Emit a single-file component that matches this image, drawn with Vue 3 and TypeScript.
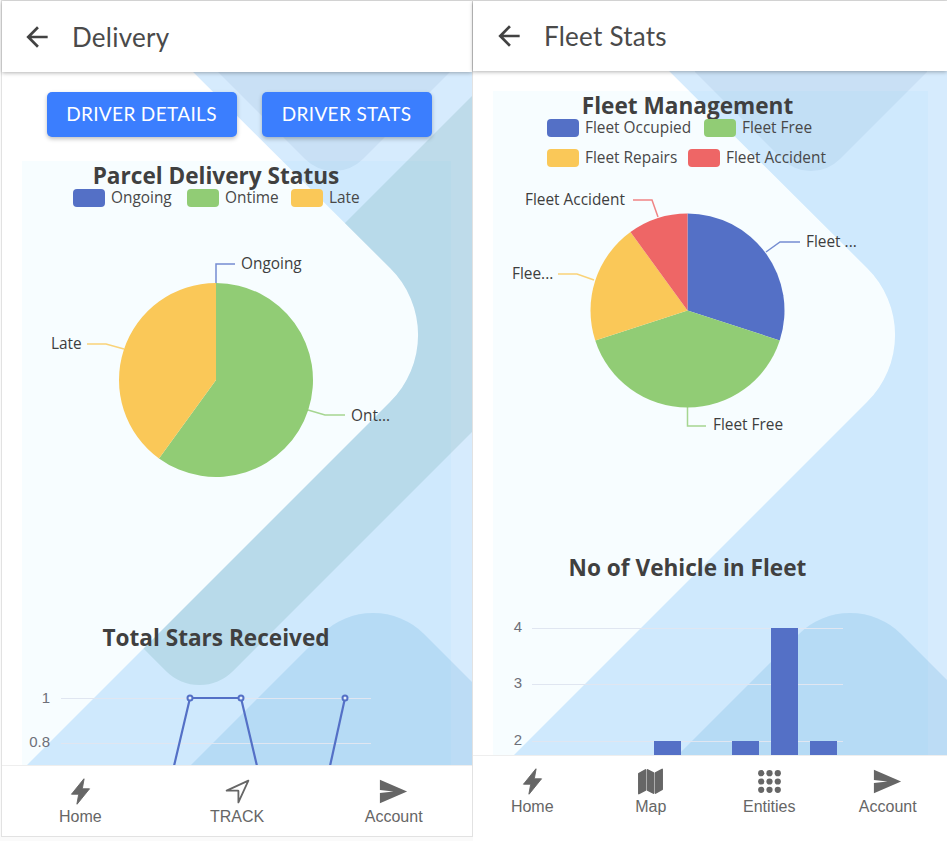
<script setup lang="ts">
// pie slice between two angles, degrees clockwise from 12 o'clock
function slice(cx: number, cy: number, r: number, from: number, to: number): string {
  const pt = (deg: number) => {
    const a = (deg * Math.PI) / 180
    return `${(cx + r * Math.sin(a)).toFixed(2)} ${(cy - r * Math.cos(a)).toFixed(2)}`
  }
  const large = to - from > 180 ? 1 : 0
  return `M${cx} ${cy}L${pt(from)}A${r} ${r} 0 ${large} 1 ${pt(to)}Z`
}

const colors = { blue: '#5470c6', green: '#91cc75', yellow: '#fac858', red: '#ee6666' }

const phones = [
  {
    id: 'delivery',
    title: 'Delivery',
    nav: [
      { icon: 'bolt', label: 'Home' },
      { icon: 'navigate', label: 'TRACK' },
      { icon: 'send', label: 'Account' },
    ],
  },
  {
    id: 'fleet',
    title: 'Fleet Stats',
    nav: [
      { icon: 'bolt', label: 'Home' },
      { icon: 'map', label: 'Map' },
      { icon: 'dots', label: 'Entities' },
      { icon: 'send', label: 'Account' },
    ],
  },
]

const deliveryLegend = [
  { x: 73, tx: 111, y: 189, color: colors.blue, label: 'Ongoing' },
  { x: 187, tx: 225, y: 189, color: colors.green, label: 'Ontime' },
  { x: 291, tx: 329, y: 189, color: colors.yellow, label: 'Late' },
]

const fleetLegend = [
  { x: 547, tx: 585, y: 119, color: colors.blue, label: 'Fleet Occupied' },
  { x: 704, tx: 742, y: 119, color: colors.green, label: 'Fleet Free' },
  { x: 547, tx: 585, y: 149, color: colors.yellow, label: 'Fleet Repairs' },
  { x: 688, tx: 726, y: 149, color: colors.red, label: 'Fleet Accident' },
]

const fleetBars = [
  { x: 654, y: 741 },
  { x: 732, y: 741 },
  { x: 771, y: 628 },
  { x: 810, y: 741 },
]

const dots = [6, 14, 22].flatMap((cy) => [6, 14, 22].map((cx) => ({ cx, cy })))
</script>

<template>
  <div class="screens">
    <section v-for="phone in phones" :key="phone.id" class="phone" :class="phone.id">
      <header class="top-bar">
        <svg class="back" viewBox="0 0 24 24" width="32" height="32">
          <path d="M20 11H7.830l5.590-5.590L12 4l-8 8 8 8 1.410-1.410L7.830 13H20z" />
        </svg>
        <h1>{{ phone.title }}</h1>
      </header>

      <main class="content">
        <!-- background art, same shapes on both screens shifted by 477px -->
        <svg class="art" :viewBox="phone.id === 'delivery' ? '2 72 470 693' : '473 71 474 684'">
          <g :transform="phone.id === 'delivery' ? '' : 'translate(477 0)'">
            <rect x="-10" y="60" width="500" height="800" fill="#d6ebfd" />
            <path d="M218 60V72L305 159A41 41 0 0 0 363 159L450 72V60Z" fill="#c9e0f5" />
            <path
              v-if="phone.id === 'delivery'"
              d="M480 88L130 438V635L166.200 671.200A47 47 0 0 0 232.800 671.200L480 424Z"
              fill="#bedbea"
            />
            <path d="M181 60L390 268A94 94 0 0 1 390 402L-50 842H-20V60Z" fill="#fff" />
            <path d="M115 841L322 634A72.400 72.400 0 0 1 424 634L640 850V860H115Z" fill="#bcdcf5" />
          </g>
        </svg>

        <div v-if="phone.id === 'delivery'" class="actions">
          <button class="btn wide">DRIVER DETAILS</button>
          <button class="btn">DRIVER STATS</button>
        </div>

        <div class="card">
          <svg v-if="phone.id === 'delivery'" class="chart" viewBox="22 161 429 604">
            <text class="title" x="216" y="184">Parcel Delivery Status</text>
            <g v-for="l in deliveryLegend" :key="l.label">
              <rect :x="l.x" :y="l.y" width="32" height="18" rx="4" :fill="l.color" />
              <text class="legend" :x="l.tx" y="202.500">{{ l.label }}</text>
            </g>

            <path :d="slice(216, 380, 97, 0, 216)" :fill="colors.green" />
            <path :d="slice(216, 380, 97, 216, 360)" :fill="colors.yellow" />
            <path class="lead" d="M216 283V264H235" :stroke="colors.blue" />
            <path class="lead" d="M124 349L106 344H87" :stroke="colors.yellow" />
            <path class="lead" d="M308 410L325 415H345" :stroke="colors.green" />
            <text class="label" x="241" y="268.500">Ongoing</text>
            <text class="label" x="51" y="348.500">Late</text>
            <text class="label" x="351" y="420.500">Ont...</text>

            <text class="title" x="216" y="646">Total Stars Received</text>
            <line class="grid" x1="61" x2="371" y1="698.500" y2="698.500" />
            <line class="grid" x1="61" x2="371" y1="743.500" y2="743.500" />
            <text class="tick" x="50" y="703">1</text>
            <text class="tick" x="50" y="747">0.8</text>
            <path class="series" d="M174 766L190 698H241L257 766" />
            <path class="series" d="M330 766L345 698" />
            <circle class="point" cx="190" cy="698" r="2.500" />
            <circle class="point" cx="241" cy="698" r="2.500" />
            <circle class="point" cx="345" cy="698" r="2.500" />
          </svg>

          <svg v-else class="chart" viewBox="493 91 435 664">
            <text class="title" x="687.500" y="114">Fleet Management</text>
            <g v-for="l in fleetLegend" :key="l.label">
              <rect :x="l.x" :y="l.y" width="32" height="18" rx="4" :fill="l.color" />
              <text class="legend" :x="l.tx" :y="l.y + 13.5">{{ l.label }}</text>
            </g>

            <path :d="slice(687.5, 310.5, 97, 0, 108)" :fill="colors.blue" />
            <path :d="slice(687.5, 310.5, 97, 108, 252)" :fill="colors.green" />
            <path :d="slice(687.5, 310.5, 97, 252, 324)" :fill="colors.yellow" />
            <path :d="slice(687.5, 310.5, 97, 324, 360)" :fill="colors.red" />
            <path class="lead" d="M766 252L780 242H800" :stroke="colors.blue" />
            <path class="lead" d="M687.500 407V426H706" :stroke="colors.green" />
            <path class="lead" d="M594 280L577 274H558" :stroke="colors.yellow" />
            <path class="lead" d="M658 217L652 200H633" :stroke="colors.red" />
            <text class="label" x="806" y="246.500">Fleet ...</text>
            <text class="label" x="713" y="430">Fleet Free</text>
            <text class="label" x="512" y="278.500">Flee...</text>
            <text class="label" x="525" y="204.500">Fleet Accident</text>

            <text class="title" x="687.500" y="576">No of Vehicle in Fleet</text>
            <line class="grid" x1="532" x2="843" y1="628.500" y2="628.500" />
            <line class="grid" x1="532" x2="843" y1="684.500" y2="684.500" />
            <line class="grid" x1="532" x2="843" y1="741.500" y2="741.500" />
            <text class="tick" x="522" y="632">4</text>
            <text class="tick" x="522" y="688">3</text>
            <text class="tick" x="522" y="745">2</text>
            <rect v-for="b in fleetBars" :key="b.x" :x="b.x" :y="b.y" width="27" :height="760 - b.y" :fill="colors.blue" />
          </svg>
        </div>
      </main>

      <nav class="tabs">
        <a v-for="item in phone.nav" :key="item.label" class="tab">
          <svg v-if="item.icon === 'bolt'" class="icon" viewBox="0 0 512 512">
            <path d="M315.270 33L96 304h128l-31.510 173.230a2.360 2.360 0 002.330 2.770h0a2.360 2.360 0 001.890-.950L416 208H288l31.660-173.250a2.450 2.450 0 00-2.440-2.750h0a2.420 2.420 0 00-1.950 1z" stroke="currentColor" stroke-width="16" stroke-linejoin="round" />
          </svg>
          <svg v-else-if="item.icon === 'navigate'" class="icon" viewBox="0 0 512 512">
            <path d="M448 64L64 240.140h200a8 8 0 018 8V448z" fill="none" stroke="currentColor" stroke-width="32" stroke-linecap="round" stroke-linejoin="round" />
          </svg>
          <svg v-else-if="item.icon === 'send'" class="icon" viewBox="0 0 512 512">
            <path d="M16 464l480-208L16 48v180l240 28-240 28z" />
          </svg>
          <svg v-else-if="item.icon === 'map'" class="icon" viewBox="0 0 512 512">
            <path d="M50 118L168 50V406L50 470Z M204 50L308 106V462L204 406Z M344 106L462 42V394L344 462Z" stroke="currentColor" stroke-width="28" stroke-linejoin="round" />
          </svg>
          <svg v-else class="icon" viewBox="0 0 28 28">
            <circle v-for="d in dots" :key="`${d.cx}-${d.cy}`" :cx="d.cx" :cy="d.cy" r="3" />
          </svg>
          <span>{{ item.label }}</span>
        </a>
      </nav>
    </section>
  </div>
</template>

<style scoped>
.screens {
  display: flex;
  align-items: flex-start;
  width: 947px;
  height: 841px;
  overflow: hidden;
}

.phone {
  position: relative;
  display: flex;
  flex-direction: column;
  box-sizing: border-box;
  background: #fff;
}

.phone.delivery {
  width: 472px;
  height: 837px;
  margin-left: 1px;
  border: 1px solid #e2e2e2;
}

.phone.fleet {
  width: 474px;
  height: 841px;
  border-top: 1px solid #e2e2e2;
}

.top-bar {
  position: relative;
  z-index: 2;
  display: flex;
  align-items: center;
  flex: none;
  height: 71px;
  padding-left: 19px;
  background: #fff;
  box-shadow: 0 1px 4px rgba(0, 0, 0, 0.3);
}

.fleet .top-bar {
  padding-left: 20px;
  height: 70px;
}

.back {
  flex: none;
  fill: #424242;
}

h1 {
  margin: 0 0 0 19px;
  font-family: Lato, "Open Sans", sans-serif;
  font-size: 26px;
  font-weight: 400;
  letter-spacing: 0.25px;
  color: #4a4a4a;
}

.content {
  position: relative;
  flex: 1;
  display: flex;
  flex-direction: column;
  min-height: 0;
  overflow: hidden;
}

.art {
  position: absolute;
  inset: 0;
  width: 100%;
  height: 100%;
}

.actions {
  position: relative;
  display: flex;
  justify-content: center;
  gap: 25px;
  padding: 20px 0 0 4px;
  margin-bottom: 24px;
}

.btn {
  width: 170px;
  height: 45px;
  padding: 0 0 2px;
  border: 0;
  border-radius: 5px;
  background: #3b7efe;
  color: #fff;
  font-family: Lato, "Open Sans", sans-serif;
  font-size: 19px;
  letter-spacing: 0.35px;
  box-shadow: 0 2px 4px rgba(0, 0, 0, 0.25);
}

.btn.wide {
  width: 190px;
}

.card {
  position: relative;
  flex: 1;
  min-height: 0;
  margin: 0 21px 0 20px;
  background: rgba(0, 200, 255, 0.03);
}

.fleet .card {
  margin: 20px 19px 0 20px;
}

.chart {
  display: block;
  width: 100%;
  height: 100%;
  overflow: visible;
}

.title {
  font-family: "Open Sans", sans-serif;
  font-size: 22.6px;
  font-weight: 700;
  fill: #404040;
  text-anchor: middle;
}

.legend,
.label {
  font-family: "Open Sans", sans-serif;
  font-size: 15.4px;
  fill: #484848;
}

.label {
  fill: #3e3e3e;
}

.lead {
  fill: none;
  stroke-width: 1.5;
  stroke-opacity: 0.8;
}

.grid {
  stroke: #e0e6f1;
  stroke-width: 1;
}

.tick {
  font-family: "Liberation Sans", Arial, sans-serif;
  font-size: 15px;
  fill: #6e7079;
  text-anchor: end;
}

.series {
  fill: none;
  stroke: #5470c6;
  stroke-width: 2.2;
}

.point {
  fill: #e4f0fb;
  stroke: #5470c6;
  stroke-width: 2;
}

.tabs {
  position: relative;
  z-index: 2;
  display: flex;
  flex: none;
  box-sizing: border-box;
  padding-top: 11px;
  background: #fff;
  border-top: 1px solid #eee;
}

.delivery .tabs {
  height: 71px;
}

.fleet .tabs {
  height: 86px;
}

.tab {
  flex: 1;
  display: flex;
  flex-direction: column;
  align-items: center;
  color: #666;
  font-family: "Liberation Sans", Arial, sans-serif;
  font-size: 16px;
  line-height: 17px;
}

.icon {
  display: block;
  width: 29px;
  height: 29px;
  margin-bottom: 2px;
  fill: currentColor;
}
</style>

<style>
body {
  background: #fafafa;
}
</style>
